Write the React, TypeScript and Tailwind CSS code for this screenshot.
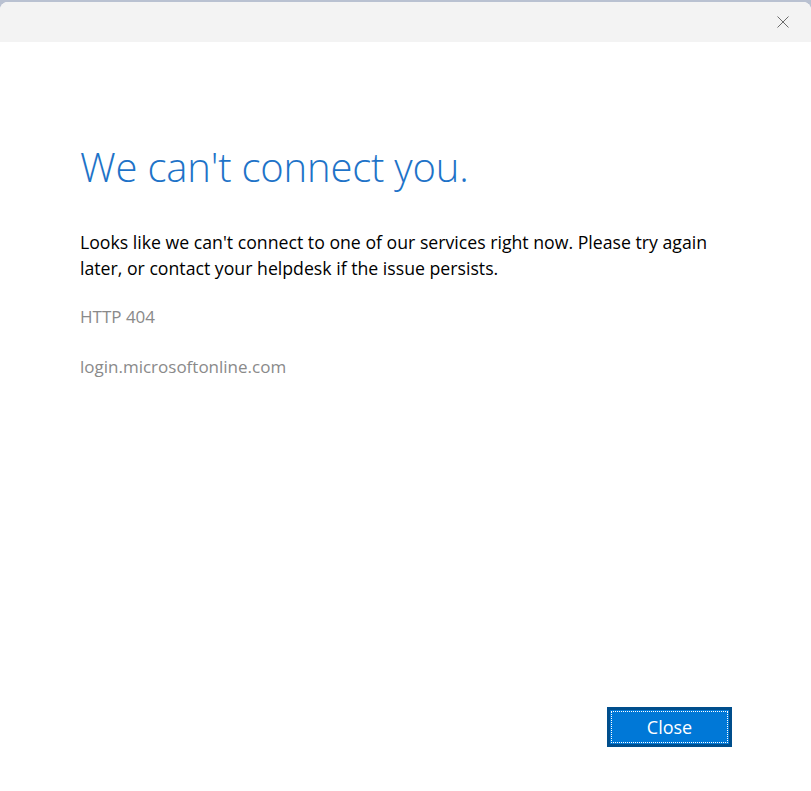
export default function App() {
  return (
    <div className="w-[811px] h-[791px] bg-[#b9c1d1] flex flex-col overflow-hidden" style={{ fontFamily: '"Open Sans", "Noto Sans", sans-serif' }}>
      <div className="h-[2px] shrink-0" />
      <div className="flex-1 flex flex-col bg-white rounded-t-[8px] overflow-hidden">
        <div className="h-[40px] shrink-0 bg-[#f3f3f3] flex items-center justify-end pr-[21px]">
          <svg width="14" height="14" viewBox="0 0 14 14" className="text-[#6b6b6b]">
            <path d="M1.5 1.5 L12.5 12.5 M12.5 1.5 L1.5 12.5" stroke="currentColor" strokeWidth="1" fill="none" />
          </svg>
        </div>
        <div className="flex-1 flex flex-col pl-[80px] pr-[70px] relative">
          <h1 className="mt-[100px] text-[40px] leading-[50px] font-light text-[#1e73c8] tracking-[-0.2px]">We can't connect you.</h1>
          <p className="mt-[37px] w-[650px] text-[17.7px] leading-[26px] text-black">
            Looks like we can't connect to one of our services right now. Please try again later, or contact your helpdesk if the issue persists.
          </p>
          <p className="mt-[23px] text-[17px] leading-[26px] text-[#8a8a8a]">HTTP 404</p>
          <p className="mt-[24px] text-[17px] leading-[26px] text-[#8a8a8a]">login.microsoftonline.com</p>
          <div className="flex-1" />
          <div className="flex justify-end mb-[44px] pr-[9px]">
            <button className="w-[125px] h-[40px] bg-[#004e8c] p-[3px]">
              <div className="w-full h-full bg-[#0078d7] p-[1px]">
                <div className="w-full h-full border border-dotted border-white flex items-center justify-center text-white text-[18px]">
                  Close
                </div>
              </div>
            </button>
          </div>
        </div>
      </div>
    </div>
  );
}
